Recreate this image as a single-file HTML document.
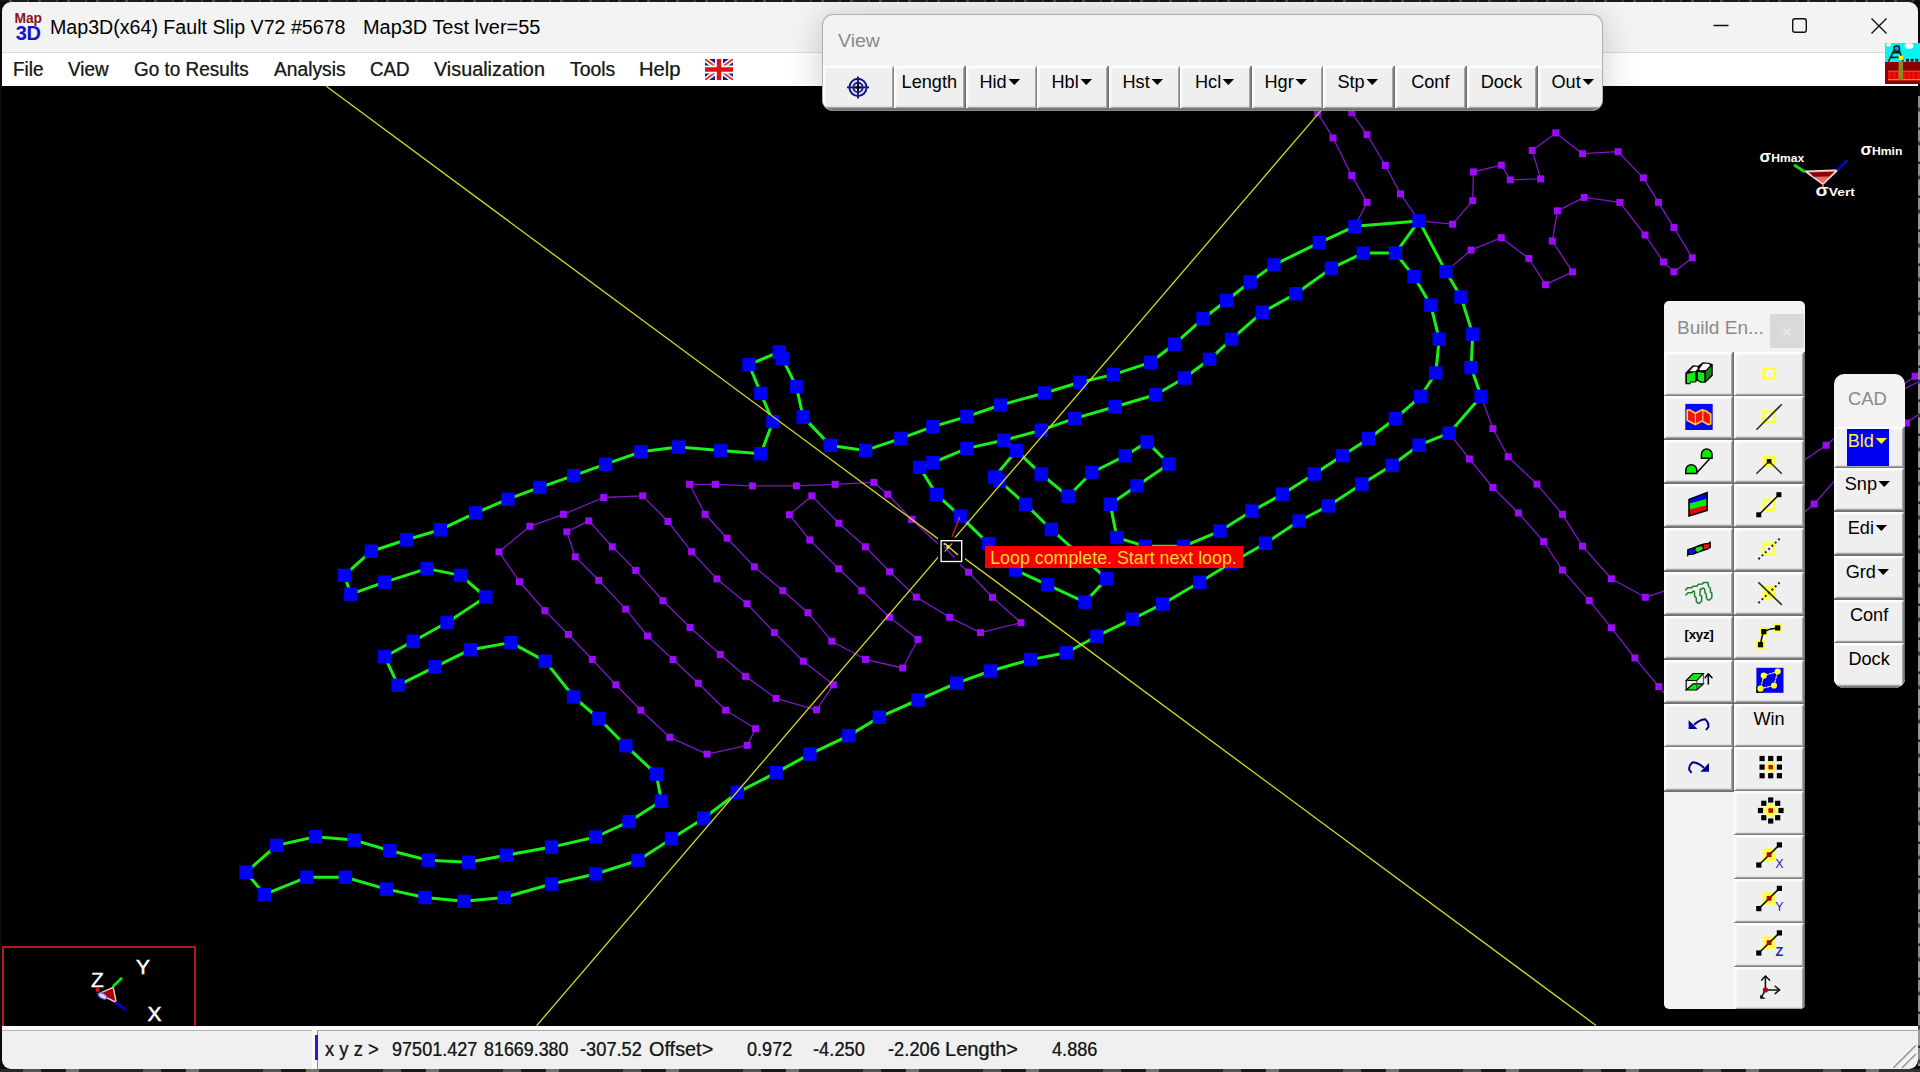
<!DOCTYPE html>
<html lang="en"><head><meta charset="utf-8"><title>Map3D(x64) Fault Slip V72 #5678</title>
<style>
html,body{margin:0;padding:0;background:#0b0b0b;}
#desk{position:absolute;left:0;top:1069px;width:1920px;height:3px;background:repeating-linear-gradient(90deg,#2a2622 0 23px,#5a554c 23px 41px,#1c1a18 41px 66px,#77726a 66px 79px,#34302c 79px 120px);}
#desk2{position:absolute;left:0;top:0;width:1920px;height:2px;background:repeating-linear-gradient(90deg,#141414 0 9px,#4a4a4a 9px 12px,#1c1c1c 12px 27px,#3a3a3a 27px 29px);}
body{width:1920px;height:1072px;position:relative;overflow:hidden;font-family:"Liberation Sans",sans-serif;}
#win{position:absolute;left:2px;top:2px;width:1916.2px;height:1067px;background:#000;border-radius:9px;overflow:hidden;}
#title{position:absolute;left:0;top:0;width:1916px;height:50px;background:#f3f3f3;border-bottom:1px solid #d9d9d9;}
.tt{transform-origin:0 50%;position:absolute;top:12.6px;font-size:19.6px;line-height:24px;color:#000;white-space:pre;}
#mapicon{position:absolute;left:0;top:0;width:46px;height:46px;font-weight:bold;}
#mapicon .m1{position:absolute;left:12.6px;top:8.8px;font-size:13.8px;line-height:16px;color:#8c1414;letter-spacing:-.1px;}
#mapicon .m2{position:absolute;left:13.8px;top:20.8px;font-size:20px;line-height:20px;color:#1414d2;letter-spacing:-.4px;}
#wc{position:absolute;left:1678px;top:0;}
#menu{position:absolute;left:0;top:51px;width:1916px;height:33px;background:#fff;}
.mi{transform-origin:0 50%;position:absolute;top:4.4px;font-size:19.6px;line-height:24px;color:#1c1c1c;white-space:pre;text-shadow:0 0 .7px rgba(0,0,0,.55);}
#flag{position:absolute;left:703px;top:6px;}
#canvas{position:absolute;left:0;top:84px;width:1916px;height:940px;background:#000;}
#status{position:absolute;left:0;top:1023.5px;width:1916px;height:43px;background:#f0f0f0;border-top:4px solid #fbfbfb;box-sizing:border-box;}
#sl{position:absolute;left:0;top:0;width:310px;height:1.4px;background:#b4b4b4;}
#sfield{position:absolute;left:310px;top:0;width:1606px;height:40px;border-left:5px solid #fafafa;box-sizing:border-box;}
#sfield i{position:absolute;left:0;top:0;width:1601px;height:39px;border-left:1.6px solid #8a8a8a;border-top:1.4px solid #a8a8a8;display:block;}
#caret{position:absolute;left:313px;top:5.4px;width:2.6px;height:25px;background:#2a1ccc;}
.st{transform-origin:0 50%;position:absolute;top:7.6px;font-size:19.6px;line-height:24px;color:#161616;white-space:pre;text-shadow:0 0 .7px rgba(0,0,0,.5);}
#grip{position:absolute;right:1.6px;bottom:0.6px;}
#redge{position:absolute;left:1918.4px;top:96px;width:1.6px;height:970px;background:repeating-linear-gradient(#8e8e8e 0 11px,#3c3c3c 12px 15px,#9a9a9a 16px 31px,#2e2e2e 32px 34px);}
#cv{position:absolute;left:0;top:0;}
#axes{position:absolute;left:2px;top:946px;width:194px;height:80px;border:2px solid #b01a1a;border-bottom:none;box-sizing:border-box;overflow:hidden;}
#axes svg{position:absolute;left:-2px;top:-2px;}
#corner{position:absolute;left:1885px;top:43px;}
.panel{position:absolute;background:#f3f3f3;box-sizing:border-box;overflow:hidden;}
#view{left:822px;top:14.2px;width:781px;height:96.6px;border-radius:11px;border:1px solid #b0b0b0;border-bottom-color:#8c8c8c;box-shadow:0 3px 34px rgba(0,0,0,.2);}
#build{left:1664px;top:301.4px;width:141.2px;height:707.8px;border-radius:5px;}
#cad{left:1833.8px;top:373.8px;width:71.2px;height:313.8px;border-radius:10px;}
.pt{transform-origin:0 50%;position:absolute;font-size:19px;line-height:24px;color:#8a8a8a;white-space:pre;}
.px{position:absolute;left:106.4px;top:12.8px;width:34px;height:34px;background:#d9d9d9;}
.row{position:absolute;left:0;}
.b{position:absolute;box-sizing:border-box;background:#efefef;box-shadow:inset -1.6px -1.8px 0 #6e6e6e, inset 1.6px 1.6px 0 #ffffff, inset -3px -3.2px 0 #a6a6a6, inset 3px 3px 0 #f6f6f6;}
.b svg{position:absolute;left:0;top:0;}
.bt{position:absolute;left:-11.6px;right:-7.6px;top:4.8px;text-align:center;font-size:19px;line-height:22px;color:#000;white-space:pre;transform:scaleX(.955);}
.bt.na{margin-left:2.4px;}
.xyz{position:absolute;left:0;width:70px;top:8.8px;text-align:center;font-size:13.4px;line-height:22px;font-weight:bold;color:#000;letter-spacing:-.3px;}
.ar{display:inline-block;width:0;height:0;border-left:6.5px solid transparent;border-right:6.5px solid transparent;border-top:6.6px solid #000;vertical-align:middle;margin-left:1.5px;position:relative;top:-1px;}
.b.sel .bx{position:absolute;left:13.6px;top:1.6px;width:42px;height:37px;background:#0000f0;}
.b.sel .bt{color:#fff04a;top:2.8px;}
.b.sel .ar{border-top-color:#ffee44;}

</style></head><body>
<div id="desk2"></div><div id="desk"></div>
<div id="win">
<div id="title"><div id="mapicon"><span class="m1">Map</span><span class="m2">3D</span></div><span id="t1" class="tt" style="left:47.80px;transform:scaleX(1.0011);">Map3D(x64) Fault Slip V72 #5678</span><span id="t2" class="tt" style="left:360.58px;transform:scaleX(1.0167);">Map3D Test lver=55</span>
<svg id="wc" width="240" height="50" viewBox="0 0 240 50"><path d="M33.5 23.5h15" stroke="#111" stroke-width="1.4" fill="none"/><rect x="112.7" y="16.7" width="13.6" height="13.6" rx="2.2" fill="none" stroke="#111" stroke-width="1.4"/><path d="M191.5 16.5l15 15m0-15l-15 15" stroke="#111" stroke-width="1.4" fill="none"/></svg>
</div>
<div id="menu"><span id="m0" class="mi" style="left:11.24px;transform:scaleX(0.9650);">File</span><span id="m1" class="mi" style="left:66.00px;transform:scaleX(0.9659);">View</span><span id="m2" class="mi" style="left:132.20px;transform:scaleX(0.9672);">Go to Results</span><span id="m3" class="mi" style="left:271.70px;transform:scaleX(0.9814);">Analysis</span><span id="m4" class="mi" style="left:367.74px;transform:scaleX(0.9573);">CAD</span><span id="m5" class="mi" style="left:432.20px;transform:scaleX(1.0115);">Visualization</span><span id="m6" class="mi" style="left:568.00px;transform:scaleX(0.9903);">Tools</span><span id="m7" class="mi" style="left:637.47px;transform:scaleX(1.0330);">Help</span><svg id="flag" width="28" height="21" viewBox="0 0 28 21"><rect width="28" height="21" fill="#1a1a8c"/><path d="M0 0L28 21M28 0L0 21" stroke="#fff" stroke-width="5"/><path d="M0 0L28 21M28 0L0 21" stroke="#e03a3a" stroke-width="2"/><path d="M14 0V21M0 10.5H28" stroke="#fff" stroke-width="8"/><path d="M14 0V21M0 10.5H28" stroke="#e01010" stroke-width="4.4"/></svg></div>
<div id="canvas"></div>
<div id="status"><div id="sl"></div><div id="sfield"><i></i></div><div id="caret"></div><span id="s0" class="st" style="left:322.70px;transform:scaleX(0.9414);">x y z &gt;</span><span id="s1" class="st" style="left:390.40px;transform:scaleX(0.9223);">97501.427</span><span id="s2" class="st" style="left:481.60px;transform:scaleX(0.9124);">81669.380</span><span id="s3" class="st" style="left:578.00px;transform:scaleX(0.9320);">-307.52</span><span id="s4" class="st" style="left:647.00px;transform:scaleX(1.0141);">Offset&gt;</span><span id="s5" class="st" style="left:744.50px;transform:scaleX(0.9245);">0.972</span><span id="s6" class="st" style="left:811.30px;transform:scaleX(0.9360);">-4.250</span><span id="s7" class="st" style="left:885.50px;transform:scaleX(0.9360);">-2.206</span><span id="s8" class="st" style="left:943.08px;transform:scaleX(1.0239);">Length&gt;</span><span id="s9" class="st" style="left:1049.60px;transform:scaleX(0.9260);">4.886</span><svg id="grip" width="30" height="30" viewBox="0 0 30 30"><path d="M5.4 30L30 5.4M14 30L30 14" stroke="#fdfdfd" stroke-width="2.2" fill="none"/><path d="M7.2 30L30 7.2M15.8 30L30 15.8" stroke="#a2a2a2" stroke-width="1.8" fill="none"/></svg></div>
</div>
<svg id="cv" width="1920" height="1072" viewBox="0 0 1920 1072">
<defs><clipPath id="cc"><rect x="2" y="86" width="1916" height="940"/></clipPath></defs>
<g clip-path="url(#cc)">
<g stroke="#7a18c8" stroke-width="1.3" fill="none" stroke-linejoin="round">
<polyline points="499.0,551.8 529.9,526.3 563.4,514.3 603.7,497.5 642.7,495.9 668.0,521.5 691.6,551.8 716.9,578.9 747.0,603.7 774.4,632.6 803.3,661.2 833.4,684.8 816.5,709.8 776.1,698.4 745.6,676.4 720.3,654.5 690.1,627.5 663.0,600.7 635.7,570.4 612.3,546.8 588.8,520.9 566.8,531.8 575.2,556.8 598.7,580.3 625.7,609.1 647.6,636.0 673.0,659.6 698.3,683.2 725.7,710.2 755.6,728.7 747.2,745.3 707.1,754.1 669.8,737.3 640.8,710.2 615.9,684.8 592.3,659.5 568.4,634.5 544.9,610.7 519.5,581.7 499.0,551.8"/>
<polyline points="689.6,484.3 715.5,484.3 752.4,485.9 796.4,485.9 835.2,484.3 873.8,482.4 887.7,494.3 911.7,519.5 968.6,572.2 992.5,597.3 1021.0,622.7 980.5,632.6 949.6,617.3 916.3,597.1 889.7,571.8 865.4,546.8 838.8,523.2 811.8,495.9 789.4,514.7 809.8,540.0 838.7,568.8 861.8,590.7 889.5,617.3 918.0,639.5 902.7,668.0 865.6,659.5 831.8,641.2 807.9,612.7 782.9,590.7 754.4,566.8 727.1,538.2 705.1,514.3 689.6,484.3"/>
<polyline points="1302.0,86.0 1317.6,112.8 1333.0,137.9 1351.8,175.6 1367.0,202.4 1354.9,226.3"/>
<polyline points="1336.0,86.0 1351.8,112.8 1367.0,134.6 1385.4,165.5 1400.5,194.0 1419.0,220.9"/>
<polyline points="1419.0,220.9 1452.6,224.2 1472.7,200.7 1473.4,171.9 1501.3,165.1 1510.3,179.9 1540.6,178.9 1532.2,150.4 1555.7,132.9 1582.5,153.7 1618.1,151.7 1643.3,177.9 1658.4,202.4 1673.9,227.6 1692.3,257.8 1673.9,271.9 1663.5,261.9 1645.0,235.0 1619.8,202.4 1584.2,197.4 1557.4,210.8 1552.3,241.0 1572.5,271.9 1545.6,284.7 1528.8,258.5 1501.3,237.7 1471.1,250.1 1445.9,271.6"/>
<polyline points="1481.1,396.3 1492.9,428.6 1508.2,456.8 1536.9,484.1 1562.4,514.3 1582.5,546.2 1611.4,578.8 1645.3,597.3 1662.5,591.6 1700.0,570.0"/>
<polyline points="1790.0,470.0 1826.2,445.2 1870.0,408.0 1915.1,376.3 1925.0,371.0"/>
<polyline points="1449.2,433.2 1469.4,459.0 1492.9,487.5 1518.4,513.0 1543.6,541.5 1562.4,570.1 1589.3,600.6 1611.4,627.8 1634.9,658.0 1658.8,686.6 1680.0,712.0"/>
<polyline points="1795.0,520.0 1814.2,504.0 1833.8,481.6 1870.0,452.0 1906.4,423.0 1925.0,410.0"/>
<polyline points="1900.0,391.0 1925.0,378.5"/>
</g>
<g fill="#9a0cfa">
<rect x="495.5" y="548.3" width="7" height="7"/><rect x="526.4" y="522.8" width="7" height="7"/><rect x="559.9" y="510.8" width="7" height="7"/><rect x="600.2" y="494.0" width="7" height="7"/><rect x="639.2" y="492.4" width="7" height="7"/><rect x="664.5" y="518.0" width="7" height="7"/><rect x="688.1" y="548.3" width="7" height="7"/><rect x="713.4" y="575.4" width="7" height="7"/><rect x="743.5" y="600.2" width="7" height="7"/><rect x="770.9" y="629.1" width="7" height="7"/><rect x="799.8" y="657.7" width="7" height="7"/><rect x="829.9" y="681.3" width="7" height="7"/><rect x="813.0" y="706.3" width="7" height="7"/><rect x="772.6" y="694.9" width="7" height="7"/><rect x="742.1" y="672.9" width="7" height="7"/><rect x="716.8" y="651.0" width="7" height="7"/><rect x="686.6" y="624.0" width="7" height="7"/><rect x="659.5" y="597.2" width="7" height="7"/><rect x="632.2" y="566.9" width="7" height="7"/><rect x="608.8" y="543.3" width="7" height="7"/><rect x="585.3" y="517.4" width="7" height="7"/><rect x="563.3" y="528.3" width="7" height="7"/><rect x="571.7" y="553.3" width="7" height="7"/><rect x="595.2" y="576.8" width="7" height="7"/><rect x="622.2" y="605.6" width="7" height="7"/><rect x="644.1" y="632.5" width="7" height="7"/><rect x="669.5" y="656.1" width="7" height="7"/><rect x="694.8" y="679.7" width="7" height="7"/><rect x="722.2" y="706.7" width="7" height="7"/><rect x="752.1" y="725.2" width="7" height="7"/><rect x="743.7" y="741.8" width="7" height="7"/><rect x="703.6" y="750.6" width="7" height="7"/><rect x="666.3" y="733.8" width="7" height="7"/><rect x="637.3" y="706.7" width="7" height="7"/><rect x="612.4" y="681.3" width="7" height="7"/><rect x="588.8" y="656.0" width="7" height="7"/><rect x="564.9" y="631.0" width="7" height="7"/><rect x="541.4" y="607.2" width="7" height="7"/><rect x="516.0" y="578.2" width="7" height="7"/>
<rect x="686.1" y="480.8" width="7" height="7"/><rect x="712.0" y="480.8" width="7" height="7"/><rect x="748.9" y="482.4" width="7" height="7"/><rect x="792.9" y="482.4" width="7" height="7"/><rect x="831.7" y="480.8" width="7" height="7"/><rect x="870.3" y="478.9" width="7" height="7"/><rect x="884.2" y="490.8" width="7" height="7"/><rect x="908.2" y="516.0" width="7" height="7"/><rect x="965.1" y="568.7" width="7" height="7"/><rect x="989.0" y="593.8" width="7" height="7"/><rect x="1017.5" y="619.2" width="7" height="7"/><rect x="977.0" y="629.1" width="7" height="7"/><rect x="946.1" y="613.8" width="7" height="7"/><rect x="912.8" y="593.6" width="7" height="7"/><rect x="886.2" y="568.3" width="7" height="7"/><rect x="861.9" y="543.3" width="7" height="7"/><rect x="835.3" y="519.7" width="7" height="7"/><rect x="808.3" y="492.4" width="7" height="7"/><rect x="785.9" y="511.2" width="7" height="7"/><rect x="806.3" y="536.5" width="7" height="7"/><rect x="835.2" y="565.3" width="7" height="7"/><rect x="858.3" y="587.2" width="7" height="7"/><rect x="886.0" y="613.8" width="7" height="7"/><rect x="914.5" y="636.0" width="7" height="7"/><rect x="899.2" y="664.5" width="7" height="7"/><rect x="862.1" y="656.0" width="7" height="7"/><rect x="828.3" y="637.7" width="7" height="7"/><rect x="804.4" y="609.2" width="7" height="7"/><rect x="779.4" y="587.2" width="7" height="7"/><rect x="750.9" y="563.3" width="7" height="7"/><rect x="723.6" y="534.7" width="7" height="7"/><rect x="701.6" y="510.8" width="7" height="7"/>
<rect x="1314.1" y="109.3" width="7" height="7"/><rect x="1329.5" y="134.4" width="7" height="7"/><rect x="1348.3" y="172.1" width="7" height="7"/><rect x="1363.5" y="198.9" width="7" height="7"/>
<rect x="1348.3" y="109.3" width="7" height="7"/><rect x="1363.5" y="131.1" width="7" height="7"/><rect x="1381.9" y="162.0" width="7" height="7"/><rect x="1397.0" y="190.5" width="7" height="7"/>
<rect x="1449.1" y="220.7" width="7" height="7"/><rect x="1469.2" y="197.2" width="7" height="7"/><rect x="1469.9" y="168.4" width="7" height="7"/><rect x="1497.8" y="161.6" width="7" height="7"/><rect x="1506.8" y="176.4" width="7" height="7"/><rect x="1537.1" y="175.4" width="7" height="7"/><rect x="1528.7" y="146.9" width="7" height="7"/><rect x="1552.2" y="129.4" width="7" height="7"/><rect x="1579.0" y="150.2" width="7" height="7"/><rect x="1614.6" y="148.2" width="7" height="7"/><rect x="1639.8" y="174.4" width="7" height="7"/><rect x="1654.9" y="198.9" width="7" height="7"/><rect x="1670.4" y="224.1" width="7" height="7"/><rect x="1688.8" y="254.3" width="7" height="7"/><rect x="1670.4" y="268.4" width="7" height="7"/><rect x="1660.0" y="258.4" width="7" height="7"/><rect x="1641.5" y="231.5" width="7" height="7"/><rect x="1616.3" y="198.9" width="7" height="7"/><rect x="1580.7" y="193.9" width="7" height="7"/><rect x="1553.9" y="207.3" width="7" height="7"/><rect x="1548.8" y="237.5" width="7" height="7"/><rect x="1569.0" y="268.4" width="7" height="7"/><rect x="1542.1" y="281.2" width="7" height="7"/><rect x="1525.3" y="255.0" width="7" height="7"/><rect x="1497.8" y="234.2" width="7" height="7"/><rect x="1467.6" y="246.6" width="7" height="7"/>
<rect x="1489.4" y="425.1" width="7" height="7"/><rect x="1504.7" y="453.3" width="7" height="7"/><rect x="1533.4" y="480.6" width="7" height="7"/><rect x="1558.9" y="510.8" width="7" height="7"/><rect x="1579.0" y="542.7" width="7" height="7"/><rect x="1607.9" y="575.3" width="7" height="7"/><rect x="1641.8" y="593.8" width="7" height="7"/>
<rect x="1822.7" y="441.7" width="7" height="7"/><rect x="1911.6" y="372.8" width="7" height="7"/>
<rect x="1465.9" y="455.5" width="7" height="7"/><rect x="1489.4" y="484.0" width="7" height="7"/><rect x="1514.9" y="509.5" width="7" height="7"/><rect x="1540.1" y="538.0" width="7" height="7"/><rect x="1558.9" y="566.6" width="7" height="7"/><rect x="1585.8" y="597.1" width="7" height="7"/><rect x="1607.9" y="624.3" width="7" height="7"/><rect x="1631.4" y="654.5" width="7" height="7"/><rect x="1655.3" y="683.1" width="7" height="7"/>
<rect x="1810.7" y="500.5" width="7" height="7"/><rect x="1902.9" y="419.5" width="7" height="7"/>
</g>
<g stroke="#18f018" stroke-width="3" fill="none" stroke-linejoin="round">
<polyline points="344.4,575.4 371.3,551.2 406.5,539.8 440.4,529.7 475.7,512.9 508.0,499.2 539.8,487.4 573.7,475.6 605.6,464.2 640.9,451.8 678.5,447.1 720.5,450.4 760.8,453.8 772.9,421.6 760.8,393.4 749.0,364.5 779.3,352.0 782.6,358.8 796.4,386.6 803.1,416.9 830.3,445.4 865.6,450.4 900.9,438.4 932.9,426.6 966.9,416.6 1000.6,405.0 1044.6,393.0 1079.9,382.3 1113.4,374.6 1150.7,362.3 1174.4,344.2 1203.0,318.7 1226.6,300.5 1250.1,282.0 1273.9,264.9 1319.3,242.7 1354.9,226.3 1419.0,220.9 1445.9,271.6 1461.0,297.1 1472.7,334.1 1471.1,367.6 1481.1,396.3 1449.2,433.2 1419.0,445.1 1392.1,465.3 1361.9,484.1 1328.3,505.9 1299.1,521.0 1265.5,543.2 1231.0,563.0 1199.7,582.2 1162.6,604.0 1132.2,619.1 1096.8,636.2 1066.2,652.8 1030.6,659.6 990.5,671.0 956.6,683.2 918.0,700.0 879.4,717.2 848.8,735.6 809.8,754.1 776.2,772.6 737.3,792.7 703.7,818.2 671.5,838.7 637.9,860.5 595.6,874.0 551.6,884.0 504.2,897.5 463.9,901.2 425.0,897.5 386.4,889.1 345.4,877.3 306.8,877.3 264.5,894.4 246.0,872.3 276.6,845.4 315.5,836.7 354.1,840.1 389.7,850.5 428.3,860.2 468.6,862.2 506.2,855.2 551.6,847.1 595.6,837.0 629.1,821.6 661.4,801.1 656.3,774.2 625.8,745.7 598.9,718.5 573.7,697.0 545.2,661.1 511.0,642.6 470.3,649.7 435.1,666.8 398.1,685.3 384.7,656.7 413.2,641.3 447.1,622.5 485.8,597.0 460.6,575.4 427.0,568.6 384.7,582.1 350.8,594.2 344.4,575.4"/>
<polyline points="919.6,467.3 933.0,462.6 966.9,448.4 1003.8,440.3 1041.3,430.2 1074.8,418.4 1115.1,406.7 1155.6,394.7 1184.4,378.0 1209.6,359.3 1231.6,339.2 1262.2,312.3 1295.8,293.8 1331.4,268.2 1363.3,253.1 1395.5,253.1 1414.0,276.6 1430.8,305.2 1439.2,339.1 1435.8,373.0 1420.7,396.3 1395.5,418.5 1368.6,438.7 1342.6,455.6 1314.2,474.0 1282.3,494.2 1251.9,511.1 1219.9,531.1 1183.5,546.3 1145.3,546.3 1116.9,537.6 1110.3,504.3 1137.0,485.8 1169.0,464.0 1147.1,441.9 1125.3,455.8 1091.8,472.5 1068.2,496.3 1041.2,474.1 1016.4,450.6 994.5,477.0 999.5,481.0 1025.6,504.4 1051.3,529.5 1106.8,578.8 1084.9,602.1 1047.6,584.8 1015.5,570.0 988.5,543.6 960.2,516.1 936.5,494.4 919.6,467.3"/>
<polyline points="1395.5,253.1 1419.0,220.9"/>
</g>
<g fill="#0000f4">
<rect x="337.7" y="568.7" width="13.4" height="13.4"/><rect x="364.6" y="544.5" width="13.4" height="13.4"/><rect x="399.8" y="533.1" width="13.4" height="13.4"/><rect x="433.7" y="523.0" width="13.4" height="13.4"/><rect x="469.0" y="506.2" width="13.4" height="13.4"/><rect x="501.3" y="492.5" width="13.4" height="13.4"/><rect x="533.1" y="480.7" width="13.4" height="13.4"/><rect x="567.0" y="468.9" width="13.4" height="13.4"/><rect x="598.9" y="457.5" width="13.4" height="13.4"/><rect x="634.2" y="445.1" width="13.4" height="13.4"/><rect x="671.8" y="440.4" width="13.4" height="13.4"/><rect x="713.8" y="443.7" width="13.4" height="13.4"/><rect x="754.1" y="447.1" width="13.4" height="13.4"/><rect x="766.2" y="414.9" width="13.4" height="13.4"/><rect x="754.1" y="386.7" width="13.4" height="13.4"/><rect x="742.3" y="357.8" width="13.4" height="13.4"/><rect x="772.6" y="345.3" width="13.4" height="13.4"/><rect x="775.9" y="352.1" width="13.4" height="13.4"/><rect x="789.7" y="379.9" width="13.4" height="13.4"/><rect x="796.4" y="410.2" width="13.4" height="13.4"/><rect x="823.6" y="438.7" width="13.4" height="13.4"/><rect x="858.9" y="443.7" width="13.4" height="13.4"/><rect x="894.2" y="431.7" width="13.4" height="13.4"/><rect x="926.2" y="419.9" width="13.4" height="13.4"/><rect x="960.2" y="409.9" width="13.4" height="13.4"/><rect x="993.9" y="398.3" width="13.4" height="13.4"/><rect x="1037.9" y="386.3" width="13.4" height="13.4"/><rect x="1073.2" y="375.6" width="13.4" height="13.4"/><rect x="1106.7" y="367.9" width="13.4" height="13.4"/><rect x="1144.0" y="355.6" width="13.4" height="13.4"/><rect x="1167.7" y="337.5" width="13.4" height="13.4"/><rect x="1196.3" y="312.0" width="13.4" height="13.4"/><rect x="1219.9" y="293.8" width="13.4" height="13.4"/><rect x="1243.4" y="275.3" width="13.4" height="13.4"/><rect x="1267.2" y="258.2" width="13.4" height="13.4"/><rect x="1312.6" y="236.0" width="13.4" height="13.4"/><rect x="1348.2" y="219.6" width="13.4" height="13.4"/><rect x="1412.3" y="214.2" width="13.4" height="13.4"/><rect x="1439.2" y="264.9" width="13.4" height="13.4"/><rect x="1454.3" y="290.4" width="13.4" height="13.4"/><rect x="1466.0" y="327.4" width="13.4" height="13.4"/><rect x="1464.4" y="360.9" width="13.4" height="13.4"/><rect x="1474.4" y="389.6" width="13.4" height="13.4"/><rect x="1442.5" y="426.5" width="13.4" height="13.4"/><rect x="1412.3" y="438.4" width="13.4" height="13.4"/><rect x="1385.4" y="458.6" width="13.4" height="13.4"/><rect x="1355.2" y="477.4" width="13.4" height="13.4"/><rect x="1321.6" y="499.2" width="13.4" height="13.4"/><rect x="1292.4" y="514.3" width="13.4" height="13.4"/><rect x="1258.8" y="536.5" width="13.4" height="13.4"/><rect x="1224.3" y="556.3" width="13.4" height="13.4"/><rect x="1193.0" y="575.5" width="13.4" height="13.4"/><rect x="1155.9" y="597.3" width="13.4" height="13.4"/><rect x="1125.5" y="612.4" width="13.4" height="13.4"/><rect x="1090.1" y="629.5" width="13.4" height="13.4"/><rect x="1059.5" y="646.1" width="13.4" height="13.4"/><rect x="1023.9" y="652.9" width="13.4" height="13.4"/><rect x="983.8" y="664.3" width="13.4" height="13.4"/><rect x="949.9" y="676.5" width="13.4" height="13.4"/><rect x="911.3" y="693.3" width="13.4" height="13.4"/><rect x="872.7" y="710.5" width="13.4" height="13.4"/><rect x="842.1" y="728.9" width="13.4" height="13.4"/><rect x="803.1" y="747.4" width="13.4" height="13.4"/><rect x="769.5" y="765.9" width="13.4" height="13.4"/><rect x="730.6" y="786.0" width="13.4" height="13.4"/><rect x="697.0" y="811.5" width="13.4" height="13.4"/><rect x="664.8" y="832.0" width="13.4" height="13.4"/><rect x="631.2" y="853.8" width="13.4" height="13.4"/><rect x="588.9" y="867.3" width="13.4" height="13.4"/><rect x="544.9" y="877.3" width="13.4" height="13.4"/><rect x="497.5" y="890.8" width="13.4" height="13.4"/><rect x="457.2" y="894.5" width="13.4" height="13.4"/><rect x="418.3" y="890.8" width="13.4" height="13.4"/><rect x="379.7" y="882.4" width="13.4" height="13.4"/><rect x="338.7" y="870.6" width="13.4" height="13.4"/><rect x="300.1" y="870.6" width="13.4" height="13.4"/><rect x="257.8" y="887.7" width="13.4" height="13.4"/><rect x="239.3" y="865.6" width="13.4" height="13.4"/><rect x="269.9" y="838.7" width="13.4" height="13.4"/><rect x="308.8" y="830.0" width="13.4" height="13.4"/><rect x="347.4" y="833.4" width="13.4" height="13.4"/><rect x="383.0" y="843.8" width="13.4" height="13.4"/><rect x="421.6" y="853.5" width="13.4" height="13.4"/><rect x="461.9" y="855.5" width="13.4" height="13.4"/><rect x="499.5" y="848.5" width="13.4" height="13.4"/><rect x="544.9" y="840.4" width="13.4" height="13.4"/><rect x="588.9" y="830.3" width="13.4" height="13.4"/><rect x="622.4" y="814.9" width="13.4" height="13.4"/><rect x="654.7" y="794.4" width="13.4" height="13.4"/><rect x="649.6" y="767.5" width="13.4" height="13.4"/><rect x="619.1" y="739.0" width="13.4" height="13.4"/><rect x="592.2" y="711.8" width="13.4" height="13.4"/><rect x="567.0" y="690.3" width="13.4" height="13.4"/><rect x="538.5" y="654.4" width="13.4" height="13.4"/><rect x="504.3" y="635.9" width="13.4" height="13.4"/><rect x="463.6" y="643.0" width="13.4" height="13.4"/><rect x="428.4" y="660.1" width="13.4" height="13.4"/><rect x="391.4" y="678.6" width="13.4" height="13.4"/><rect x="378.0" y="650.0" width="13.4" height="13.4"/><rect x="406.5" y="634.6" width="13.4" height="13.4"/><rect x="440.4" y="615.8" width="13.4" height="13.4"/><rect x="479.1" y="590.3" width="13.4" height="13.4"/><rect x="453.9" y="568.7" width="13.4" height="13.4"/><rect x="420.3" y="561.9" width="13.4" height="13.4"/><rect x="378.0" y="575.4" width="13.4" height="13.4"/><rect x="344.1" y="587.5" width="13.4" height="13.4"/>
<rect x="912.9" y="460.6" width="13.4" height="13.4"/><rect x="926.3" y="455.9" width="13.4" height="13.4"/><rect x="960.2" y="441.7" width="13.4" height="13.4"/><rect x="997.1" y="433.6" width="13.4" height="13.4"/><rect x="1034.6" y="423.5" width="13.4" height="13.4"/><rect x="1068.1" y="411.7" width="13.4" height="13.4"/><rect x="1108.4" y="400.0" width="13.4" height="13.4"/><rect x="1148.9" y="388.0" width="13.4" height="13.4"/><rect x="1177.7" y="371.3" width="13.4" height="13.4"/><rect x="1202.9" y="352.6" width="13.4" height="13.4"/><rect x="1224.9" y="332.5" width="13.4" height="13.4"/><rect x="1255.5" y="305.6" width="13.4" height="13.4"/><rect x="1289.1" y="287.1" width="13.4" height="13.4"/><rect x="1324.7" y="261.5" width="13.4" height="13.4"/><rect x="1356.6" y="246.4" width="13.4" height="13.4"/><rect x="1388.8" y="246.4" width="13.4" height="13.4"/><rect x="1407.3" y="269.9" width="13.4" height="13.4"/><rect x="1424.1" y="298.5" width="13.4" height="13.4"/><rect x="1432.5" y="332.4" width="13.4" height="13.4"/><rect x="1429.1" y="366.3" width="13.4" height="13.4"/><rect x="1414.0" y="389.6" width="13.4" height="13.4"/><rect x="1388.8" y="411.8" width="13.4" height="13.4"/><rect x="1361.9" y="432.0" width="13.4" height="13.4"/><rect x="1335.9" y="448.9" width="13.4" height="13.4"/><rect x="1307.5" y="467.3" width="13.4" height="13.4"/><rect x="1275.6" y="487.5" width="13.4" height="13.4"/><rect x="1245.2" y="504.4" width="13.4" height="13.4"/><rect x="1213.2" y="524.4" width="13.4" height="13.4"/><rect x="1176.8" y="539.6" width="13.4" height="13.4"/><rect x="1138.6" y="539.6" width="13.4" height="13.4"/><rect x="1110.2" y="530.9" width="13.4" height="13.4"/><rect x="1103.6" y="497.6" width="13.4" height="13.4"/><rect x="1130.3" y="479.1" width="13.4" height="13.4"/><rect x="1162.3" y="457.3" width="13.4" height="13.4"/><rect x="1140.4" y="435.2" width="13.4" height="13.4"/><rect x="1118.6" y="449.1" width="13.4" height="13.4"/><rect x="1085.1" y="465.8" width="13.4" height="13.4"/><rect x="1061.5" y="489.6" width="13.4" height="13.4"/><rect x="1034.5" y="467.4" width="13.4" height="13.4"/><rect x="1009.7" y="443.9" width="13.4" height="13.4"/><rect x="987.8" y="470.3" width="13.4" height="13.4"/><rect x="992.8" y="474.3" width="13.4" height="13.4"/><rect x="1018.9" y="497.7" width="13.4" height="13.4"/><rect x="1044.6" y="522.8" width="13.4" height="13.4"/><rect x="1100.1" y="572.1" width="13.4" height="13.4"/><rect x="1078.2" y="595.4" width="13.4" height="13.4"/><rect x="1040.9" y="578.1" width="13.4" height="13.4"/><rect x="1008.8" y="563.3" width="13.4" height="13.4"/><rect x="981.8" y="536.9" width="13.4" height="13.4"/><rect x="953.5" y="509.4" width="13.4" height="13.4"/><rect x="929.8" y="487.7" width="13.4" height="13.4"/>
</g>
<g stroke="#d6d828" stroke-width="1.3" fill="none">
<polyline points="326.3,86.3 1596.0,1025.4"/><polyline points="536.6,1025.7 1342.1,86.0"/></g>
<line x1="959.2" y1="518.4" x2="952" y2="536.8" stroke="#b41c1c" stroke-width="1.5"/><line x1="959.6" y1="517" x2="958.6" y2="520" stroke="#b030e0" stroke-width="1.5"/>
<g id="cursor"><rect x="938" y="537.5" width="27" height="27" fill="#000"/><rect x="941.1" y="540.7" width="20.6" height="20.8" fill="#000" stroke="#fff" stroke-width="1.35"/><line x1="943.8" y1="546.4" x2="954.4" y2="557.6" stroke="#6a10b8" stroke-width="1.6"/><line x1="945.2" y1="543.8" x2="958" y2="555" stroke="#d8d850" stroke-width="1.5"/><line x1="944.6" y1="551.6" x2="952.2" y2="543.4" stroke="#b8b848" stroke-width="1.2"/><circle cx="948.2" cy="546.8" r="1.9" fill="#d8f020"/><rect x="943.6" y="543" width="2.2" height="2" fill="#c8c8d8"/></g>
<rect x="984.6" y="546.4" width="258.2" height="21.2" fill="#f60000" shape-rendering="crispEdges"/>
<text x="990.2" y="563.8" font-family="Liberation Sans, sans-serif" font-size="18.6px" fill="#ffd83a" textLength="246.6" lengthAdjust="spacingAndGlyphs">Loop complete. Start next loop.</text>
<g id="stress"><polygon points="1805.2,171.2 1837.6,170.2 1822.9,184.3" fill="#e86a6a" stroke="#e8dcdc" stroke-width="1.6"/><polygon points="1809.5,172.6 1834,171.8 1829,176.6 1813.5,176.8" fill="#900000"/><line x1="1795" y1="165.6" x2="1803.8" y2="171.2" stroke="#10d810" stroke-width="3" stroke-linecap="round"/><line x1="1846.6" y1="161" x2="1838" y2="169.4" stroke="#0808b8" stroke-width="3" stroke-linecap="round"/><line x1="1822.9" y1="184" x2="1822.9" y2="187" stroke="#f06060" stroke-width="2"/><g font-family="Liberation Sans, sans-serif" font-weight="bold" fill="#fff"><text x="1759.6" y="162" font-size="11.5px" textLength="44.6" lengthAdjust="spacingAndGlyphs"><tspan font-size="16px">σ</tspan>Hmax</text><text x="1860.4" y="155.2" font-size="11.5px" textLength="42" lengthAdjust="spacingAndGlyphs"><tspan font-size="16px">σ</tspan>Hmin</text><text x="1815.4" y="195.8" font-size="11.5px" textLength="39.6" lengthAdjust="spacingAndGlyphs"><tspan font-size="16px">σ</tspan>Vert</text></g></g>
</g>
</svg>
<div id="redge"></div>
<div id="axes"><svg width="194" height="80" viewBox="2 946 194 80"><g><polygon points="113.3,987.4 98.6,993.7 116.2,1002.5" fill="#a80000" stroke="#f4d0d0" stroke-width="1.4"/><ellipse cx="102.5" cy="996" rx="4.6" ry="2.6" transform="rotate(28 102.5 996)" fill="#d8d8f4" stroke="#5050c8" stroke-width="1"/><line x1="113.5" y1="986" x2="121.3" y2="978.4" stroke="#10e010" stroke-width="2.8" stroke-linecap="round"/><line x1="116.5" y1="1002.8" x2="125" y2="1009.4" stroke="#0000c8" stroke-width="3" stroke-linecap="round"/><rect x="95.8" y="988.2" width="3.4" height="3.6" fill="#f01010"/></g><text x="136" y="973.8" font-family="Liberation Sans, sans-serif" font-size="21px" fill="#fff" stroke="#fff" stroke-width="0.5">Y</text><text x="91" y="986.8" font-family="Liberation Sans, sans-serif" font-size="21px" fill="#fff" stroke="#fff" stroke-width="0.3">Z</text><text x="147.6" y="1021" font-family="Liberation Sans, sans-serif" font-size="21px" fill="#fff" stroke="#fff" stroke-width="0.5">X</text></svg></div>
<svg id="corner" width="35" height="41" viewBox="0 0 35 41"><rect width="35" height="19.2" fill="#08f4f4"/><rect y="19" width="35" height="22" fill="#8c0000"/><rect x="3" y="29" width="32" height="7" fill="#f60a0a"/><path d="M7 29v7M11.5 29v7M22 29v7M26.5 29v7M31 29v7" stroke="#c00808" stroke-width="1.4"/><rect x="3" y="27.6" width="32" height="1.3" fill="#c8601c"/><rect x="3" y="36" width="32" height="1.3" fill="#e08840"/><rect x="13.6" y="18.6" width="4.4" height="18.4" fill="#8c8c1c"/><rect x="1.2" y="0.2" width="5" height="3.2" rx="1.4" fill="#f8ffff"/><rect x="19.8" y="0.2" width="8.6" height="5.6" rx="2.4" fill="#f8ffff"/><path d="M3.4 18.6L10 5.4M13.6 5.4L18 18.6M8.4 9.6H15M5.6 14.4H17" stroke="#0a2424" stroke-width="1.7" fill="none"/><circle cx="11.8" cy="5.6" r="2.8" fill="#2aa0b4" stroke="#0a1c1c" stroke-width="1.5"/><rect x="13.6" y="12.6" width="4.4" height="4.4" fill="#f6f60a"/><path d="M21 17.2H35" stroke="#0c2020" stroke-width="3" stroke-dasharray="3 1.6"/></svg>
<div class="panel" id="view"><span id="pv" class="pt" style="left:14.50px;transform:scaleX(1.0263);top:13.6px;">View</span><div class="row" style="top:50.6px"><div class="b " style="left:-0.4px;top:0px;width:71.9px;height:44.6px"><svg width="71" height="44" viewBox="0 0 71 44"><g fill="none" stroke="#14147e" stroke-width="1.9"><circle cx="35" cy="21.4" r="8.6" fill="#dcdcfa"/><circle cx="35" cy="21.4" r="4.6" fill="#e8e8f4"/><path d="M35 10.4V32.4M24 21.4H46"/></g><path d="M35 18.6V24.2M32.2 21.4H37.8" stroke="#000" stroke-width="2"/></svg></div><div class="b " style="left:71.1px;top:0px;width:71.9px;height:44.6px"><span class="bt na">Length</span></div><div class="b " style="left:142.7px;top:0px;width:71.9px;height:44.6px"><span class="bt">Hid<i class="ar"></i></span></div><div class="b " style="left:214.2px;top:0px;width:71.9px;height:44.6px"><span class="bt">Hbl<i class="ar"></i></span></div><div class="b " style="left:285.8px;top:0px;width:71.9px;height:44.6px"><span class="bt">Hst<i class="ar"></i></span></div><div class="b " style="left:357.4px;top:0px;width:71.9px;height:44.6px"><span class="bt">Hcl<i class="ar"></i></span></div><div class="b " style="left:428.9px;top:0px;width:71.9px;height:44.6px"><span class="bt">Hgr<i class="ar"></i></span></div><div class="b " style="left:500.4px;top:0px;width:71.9px;height:44.6px"><span class="bt">Stp<i class="ar"></i></span></div><div class="b " style="left:572.0px;top:0px;width:71.9px;height:44.6px"><span class="bt na">Conf</span></div><div class="b " style="left:643.5px;top:0px;width:71.9px;height:44.6px"><span class="bt na">Dock</span></div><div class="b " style="left:715.1px;top:0px;width:71.9px;height:44.6px"><span class="bt">Out<i class="ar"></i></span></div></div></div>
<div class="panel" id="build"><span id="pb" class="pt" style="left:12.61px;transform:scaleX(1.0033);top:14.2px;">Build En...</span><div class="px"><svg width="34" height="34" viewBox="0 0 34 34"><path d="M13.5 14.5l7 7m0-7l-7 7" stroke="#ececec" stroke-width="1.4" fill="none"/></svg></div><div class="row" style="top:50.8px"><div class="b " style="left:0px;top:0.0px;width:70.4px;height:44.4px"><svg width="70" height="44" viewBox="0 0 70 44" ><polygon points="21.33,20.83 28.79,13.37 34.01,13.74 38.87,10.20 44.09,10.76 48.75,12.06 48.75,23.63 41.48,30.72 36.63,30.72 33.27,28.67 31.40,30.53 26.93,30.53 26.18,32.21 21.33,32.21" fill="#000" stroke="none" stroke-width="0" /><polygon points="23.01,21.95 31.22,20.08 31.22,29.41 26.37,29.60 25.99,31.09 23.01,31.09" fill="#12f012" stroke="none" stroke-width="0" /><polygon points="33.83,19.71 40.17,21.02 40.17,29.79 37.00,29.60 33.83,27.55" fill="#12f012" stroke="none" stroke-width="0" /><polygon points="42.04,19.34 47.45,14.11 47.45,22.70 42.04,28.85" fill="#108a10" stroke="none" stroke-width="0" /><polygon points="25.43,19.15 29.54,14.86 33.27,14.86 33.83,16.73 31.40,19.15" fill="#fff" stroke="none" stroke-width="0" /><polygon points="35.32,17.10 39.24,11.87 43.72,11.87 46.33,12.99 41.85,18.03 35.88,18.22" fill="#fff" stroke="none" stroke-width="0" /></svg></div><div class="b " style="left:0px;top:43.9px;width:70.4px;height:44.4px"><svg width="70" height="44" viewBox="0 0 70 44" ><rect x="21.3" y="7.9" width="27.4" height="26.1" fill="#0808f0"/><polygon points="23.19,14.21 26.18,14.21 31.40,17.20 38.12,13.84 41.85,14.96 46.70,18.32 46.70,28.02 44.09,28.39 38.12,25.03 31.40,28.58 26.93,26.15 23.19,24.29" fill="#f81008" stroke="#ffc848" stroke-width="1.7" stroke-linejoin="round"/><polyline points="31.40,17.57 31.40,28.02" fill="none" stroke="#ffd060" stroke-width="1.3" stroke-linejoin="round" stroke-linecap="round" stroke-dasharray="1.3 1.3"/><polyline points="38.87,14.40 38.87,24.85" fill="none" stroke="#ffd060" stroke-width="1.3" stroke-linejoin="round" stroke-linecap="round" stroke-dasharray="1.3 1.3"/></svg></div><div class="b " style="left:0px;top:87.8px;width:70.4px;height:44.4px"><svg width="70" height="44" viewBox="0 0 70 44" ><line x1="32.8" y1="32.8" x2="46.0" y2="18.5" stroke="#000" stroke-width="1.5" /><path d="M37.4 18.2 L37.4 14.4 A5.3 5.3 0 0 1 48.0 14.4 L48.0 18.2 Z" fill="#00f000" stroke="#000" stroke-width="1.5"/><path d="M21.8 33.5 L21.8 30.2 A5.5 5.5 0 0 1 32.8 30.2 L32.8 33.5 Z" fill="#00f000" stroke="#000" stroke-width="1.5"/></svg></div><div class="b " style="left:0px;top:131.8px;width:70.4px;height:44.4px"><svg width="70" height="44" viewBox="0 0 70 44" ><polygon points="25.0,15.6 43.1,9.0 43.1,15.2 25.0,20.1" fill="#0000f0" stroke="none" stroke-width="1" /><polygon points="25.0,19.7 43.1,14.8 43.1,21.5 25.0,25.9" fill="#00f000" stroke="none" stroke-width="1" /><polygon points="25.0,25.5 43.1,21.2 43.1,26.3 25.0,31.6" fill="#f00000" stroke="none" stroke-width="1" /><polygon points="25.0,15.6 43.1,8.6 43.1,26.3 25.0,31.9" fill="none" stroke="#000" stroke-width="1.6" /></svg></div><div class="b " style="left:0px;top:175.7px;width:70.4px;height:44.4px"><svg width="70" height="44" viewBox="0 0 70 44" ><polygon points="23.19,21.13 29.91,18.89 35.13,16.65 40.36,15.16 44.84,14.79 45.58,13.29 46.89,13.67 46.89,19.64 44.09,21.50 39.61,23.00 34.39,24.86 29.54,26.73 24.69,27.10 23.94,28.59 23.01,28.22" fill="#000" stroke="none" stroke-width="0" /><polygon points="24.50,22.06 30.10,20.20 31.22,23.00 29.54,25.42 24.87,25.98" fill="#1010e8" stroke="none" stroke-width="0" /><polygon points="31.59,19.82 38.12,17.96 38.87,21.32 33.83,23.93 31.59,23.00" fill="#20e020" stroke="none" stroke-width="0" /><polygon points="39.80,16.47 44.84,15.98 45.51,18.89 43.34,20.68 39.80,20.94" fill="#f01010" stroke="none" stroke-width="0" /></svg></div><div class="b " style="left:0px;top:219.6px;width:70.4px;height:44.4px"><svg width="70" height="44" viewBox="0 0 70 44" ><polyline points="21.70,17.87 23.94,15.63 27.67,15.63 29.16,14.14 32.90,14.14 34.39,12.27 38.12,12.09 39.61,10.60 44.09,10.60 44.46,14.51 46.33,16.01 46.51,20.11 47.82,20.86 47.82,25.71 45.58,27.95 44.09,27.95 42.41,26.08 42.22,21.98 40.92,20.86 40.73,17.13 39.24,16.01 36.25,17.50 35.88,23.10 37.75,24.21 37.56,29.07 35.51,31.30 34.01,31.30 32.34,29.44 32.15,25.71 30.66,24.59 30.47,19.74 29.16,18.99 27.67,20.86 23.94,20.86 21.89,22.91" fill="none" stroke="#1c8030" stroke-width="1.5" stroke-linejoin="round" stroke-linecap="round" /></svg></div><div class="b " style="left:0px;top:263.5px;width:70.4px;height:44.4px"><span class="xyz">[xyz]</span></div><div class="b " style="left:0px;top:307.4px;width:70.4px;height:44.4px"><svg width="70" height="44" viewBox="0 0 70 44" ><polygon points="22.2,30.0 29.1,23.8 39.4,23.8 32.8,30.0" fill="#00f000" stroke="#000" stroke-width="1.2" /><polygon points="22.2,20.5 29.1,13.5 39.4,13.5 32.8,20.5" fill="#00f000" stroke="#000" stroke-width="1.2" /><line x1="22.2" y1="20.5" x2="22.2" y2="30.0" stroke="#000" stroke-width="1.2" /><line x1="32.8" y1="20.5" x2="32.8" y2="30.0" stroke="#444" stroke-width="1" /><line x1="39.4" y1="13.5" x2="39.4" y2="23.8" stroke="#444" stroke-width="1" /><line x1="44.3" y1="24.6" x2="44.3" y2="14.1" stroke="#000" stroke-width="1.6" /><path d="M41.1 17.7 L44.3 13.8 L48.0 17.7" fill="none" stroke="#000" stroke-width="1.6" stroke-linejoin="round" stroke-linecap="round" /></svg></div><div class="b " style="left:0px;top:351.4px;width:70.4px;height:44.4px"><svg width="70" height="44" viewBox="0 0 70 44" ><polygon points="24.6,16.0 24.6,24.9 33.5,24.9" fill="#00008c"/><path d="M30.0 20.8 Q35.3 15.6 41.1 15.2 Q45.0 18.5 44.3 23.0 L42.0 26.0" fill="none" stroke="#00008c" stroke-width="2"/></svg></div><div class="b " style="left:0px;top:395.3px;width:70.4px;height:44.4px"><svg width="70" height="44" viewBox="0 0 70 44" ><polygon points="45.0,16.0 45.0,24.8 36.3,24.8" fill="#00008c"/><path d="M39.8 20.7 Q34.5 15.4 28.7 15.2 Q24.5 18.5 25.3 22.8 L27.6 25.9" fill="none" stroke="#00008c" stroke-width="2"/></svg></div><div class="b " style="left:70px;top:0.0px;width:71.4px;height:44.4px"><svg width="71" height="44" viewBox="0 0 71 44" ><rect x="29.6" y="16.7" width="11.0" height="9.7" fill="#f2f2fb" stroke="#ffff48" stroke-width="3"/></svg></div><div class="b " style="left:70px;top:43.9px;width:71.4px;height:44.4px"><svg width="71" height="44" viewBox="0 0 71 44" ><rect x="29.6" y="15.9" width="11.0" height="10.1" fill="#f2f2fb" stroke="#ffff48" stroke-width="3"/><line x1="22.4" y1="33.7" x2="47.8" y2="8.2" stroke="#2a2a2a" stroke-width="1.6" /></svg></div><div class="b " style="left:70px;top:87.8px;width:71.4px;height:44.4px"><svg width="71" height="44" viewBox="0 0 71 44" ><rect x="28.5" y="15.2" width="13.1" height="12.7" fill="#ffff48" stroke="none" stroke-width="0"/><rect x="32.8" y="19.1" width="4.6" height="4.4" fill="#000" stroke="none" stroke-width="0"/><line x1="22.4" y1="33.7" x2="34.7" y2="21.8" stroke="#2a2a2a" stroke-width="1.5" /><line x1="35.5" y1="21.8" x2="47.8" y2="33.7" stroke="#2a2a2a" stroke-width="1.5" /></svg></div><div class="b " style="left:70px;top:131.8px;width:71.4px;height:44.4px"><svg width="71" height="44" viewBox="0 0 71 44" ><rect x="30.0" y="15.9" width="10.1" height="10.1" fill="#f2f2fb" stroke="#ffff48" stroke-width="3"/><line x1="24.8" y1="30.8" x2="44.9" y2="10.7" stroke="#111" stroke-width="1.6" /><rect x="42.4" y="8.2" width="5.0" height="5.0" fill="#000" stroke="none" stroke-width="0"/><rect x="22.3" y="28.3" width="5.0" height="5.0" fill="#000" stroke="none" stroke-width="0"/></svg></div><div class="b " style="left:70px;top:175.7px;width:71.4px;height:44.4px"><svg width="71" height="44" viewBox="0 0 71 44" ><rect x="30.0" y="15.7" width="10.1" height="10.5" fill="#f2f2fb" stroke="#ffff48" stroke-width="3"/><line x1="24.4" y1="31.2" x2="45.6" y2="10.8" stroke="#222" stroke-width="2" stroke-dasharray="2 2.6"/></svg></div><div class="b " style="left:70px;top:219.6px;width:71.4px;height:44.4px"><svg width="71" height="44" viewBox="0 0 71 44" ><rect x="28.5" y="13.5" width="13.1" height="14.0" fill="#ffff48" stroke="none" stroke-width="0"/><line x1="24.4" y1="10.3" x2="47.8" y2="32.8" stroke="#2a2a2a" stroke-width="1.6" /><line x1="24.4" y1="31.0" x2="45.6" y2="10.5" stroke="#222" stroke-width="2" stroke-dasharray="2 2.6"/></svg></div><div class="b " style="left:70px;top:263.5px;width:71.4px;height:44.4px"><svg width="71" height="44" viewBox="0 0 71 44" ><rect x="39.1" y="7.3" width="9.2" height="9.2" fill="#ffff48" stroke="none" stroke-width="0"/><rect x="25.2" y="11.0" width="9.2" height="9.2" fill="#ffff48" stroke="none" stroke-width="0"/><rect x="21.9" y="24.1" width="9.2" height="9.2" fill="#ffff48" stroke="none" stroke-width="0"/><path d="M43.7 11.9 L36.7 12.9 L29.8 15.6 L27.7 21.8 L26.5 28.7" fill="none" stroke="#000" stroke-width="1.5" stroke-linejoin="round" stroke-linecap="round" /><rect x="41.1" y="9.3" width="5.2" height="5.2" fill="#000" stroke="none" stroke-width="0"/><rect x="27.2" y="13.0" width="5.2" height="5.2" fill="#000" stroke="none" stroke-width="0"/><rect x="23.9" y="26.1" width="5.2" height="5.2" fill="#000" stroke="none" stroke-width="0"/></svg></div><div class="b " style="left:70px;top:307.4px;width:71.4px;height:44.4px"><svg width="71" height="44" viewBox="0 0 71 44" ><rect x="22.4" y="7.8" width="27.1" height="25.0" fill="#0000e8" stroke="none" stroke-width="0"/><polygon points="22.4,26.3 22.4,32.8 29.8,32.8" fill="#000" stroke="none" stroke-width="1" /><path d="M43.7 11.5 L29.8 15.6 L26.5 28.7 L40.0 25.5 Z" fill="none" stroke="#e8e8a0" stroke-width="1.2" stroke-linejoin="round" stroke-linecap="round" stroke-dasharray="2 1.5"/><circle cx="43.7" cy="11.5" r="3.1" fill="#ffff20" stroke="none" stroke-width="0"/><circle cx="29.8" cy="15.6" r="3.1" fill="#ffff20" stroke="none" stroke-width="0"/><circle cx="40.0" cy="25.5" r="3.1" fill="#ffff20" stroke="none" stroke-width="0"/><circle cx="26.5" cy="28.7" r="3.1" fill="#ffff20" stroke="none" stroke-width="0"/></svg></div><div class="b " style="left:70px;top:351.4px;width:71.4px;height:44.4px"><span class="bt na" style="top:4px">Win</span></div><div class="b " style="left:70px;top:395.3px;width:71.4px;height:44.4px"><svg width="71" height="44" viewBox="0 0 71 44" ><rect x="25.5" y="8.9" width="5.2" height="5.2" fill="#000" stroke="none" stroke-width="0"/><rect x="25.5" y="17.5" width="5.2" height="5.2" fill="#000" stroke="none" stroke-width="0"/><rect x="25.5" y="26.1" width="5.2" height="5.2" fill="#000" stroke="none" stroke-width="0"/><rect x="34.1" y="8.9" width="5.2" height="5.2" fill="#000" stroke="none" stroke-width="0"/><rect x="34.1" y="26.1" width="5.2" height="5.2" fill="#000" stroke="none" stroke-width="0"/><rect x="42.8" y="8.9" width="5.2" height="5.2" fill="#000" stroke="none" stroke-width="0"/><rect x="42.8" y="17.5" width="5.2" height="5.2" fill="#000" stroke="none" stroke-width="0"/><rect x="42.8" y="26.1" width="5.2" height="5.2" fill="#000" stroke="none" stroke-width="0"/><circle cx="36.7" cy="20.1" r="5.6" fill="#ffff48" stroke="none" stroke-width="0"/><rect x="34.5" y="17.9" width="4.4" height="4.4" fill="#c80000" stroke="none" stroke-width="0"/></svg></div><div class="b " style="left:70px;top:439.2px;width:71.4px;height:44.4px"><svg width="71" height="44" viewBox="0 0 71 44" ><rect x="34.1" y="6.4" width="5.2" height="5.2" fill="#000" stroke="none" stroke-width="0"/><rect x="41.1" y="9.7" width="5.2" height="5.2" fill="#000" stroke="none" stroke-width="0"/><rect x="44.4" y="16.9" width="5.2" height="5.2" fill="#000" stroke="none" stroke-width="0"/><rect x="41.1" y="24.1" width="5.2" height="5.2" fill="#000" stroke="none" stroke-width="0"/><rect x="34.1" y="27.4" width="5.2" height="5.2" fill="#000" stroke="none" stroke-width="0"/><rect x="27.2" y="24.1" width="5.2" height="5.2" fill="#000" stroke="none" stroke-width="0"/><rect x="23.9" y="16.9" width="5.2" height="5.2" fill="#000" stroke="none" stroke-width="0"/><rect x="27.2" y="9.7" width="5.2" height="5.2" fill="#000" stroke="none" stroke-width="0"/><circle cx="36.7" cy="19.5" r="6.6" fill="#ffff48" stroke="none" stroke-width="0"/><rect x="34.4" y="17.2" width="4.6" height="4.6" fill="#c80000" stroke="none" stroke-width="0"/></svg></div><div class="b " style="left:70px;top:483.1px;width:71.4px;height:44.4px"><svg width="71" height="44" viewBox="0 0 71 44" ><rect x="28.5" y="13.5" width="12.7" height="12.7" fill="#ffff48" stroke="none" stroke-width="0"/><line x1="24.8" y1="30.0" x2="45.4" y2="9.9" stroke="#111" stroke-width="1.6" /><rect x="42.8" y="7.3" width="5.2" height="5.2" fill="#000" stroke="none" stroke-width="0"/><rect x="22.2" y="27.4" width="5.2" height="5.2" fill="#000" stroke="none" stroke-width="0"/><rect x="32.7" y="17.3" width="4.8" height="4.8" fill="#b00000" stroke="none" stroke-width="0"/><text x="45.4" y="32.7" text-anchor="middle" font-family="Liberation Sans, sans-serif" font-size="12.5px" font-weight="normal" fill="#2424b4">X</text></svg></div><div class="b " style="left:70px;top:527.0px;width:71.4px;height:44.4px"><svg width="71" height="44" viewBox="0 0 71 44" ><rect x="28.5" y="13.1" width="12.7" height="12.7" fill="#ffff48" stroke="none" stroke-width="0"/><line x1="24.8" y1="29.6" x2="45.4" y2="9.4" stroke="#111" stroke-width="1.6" /><rect x="42.8" y="6.8" width="5.2" height="5.2" fill="#000" stroke="none" stroke-width="0"/><rect x="22.2" y="27.0" width="5.2" height="5.2" fill="#000" stroke="none" stroke-width="0"/><rect x="32.7" y="16.9" width="4.8" height="4.8" fill="#b00000" stroke="none" stroke-width="0"/><text x="45.4" y="32.3" text-anchor="middle" font-family="Liberation Sans, sans-serif" font-size="12.5px" font-weight="normal" fill="#2424b4">Y</text></svg></div><div class="b " style="left:70px;top:571.0px;width:71.4px;height:44.4px"><svg width="71" height="44" viewBox="0 0 71 44" ><rect x="28.5" y="13.5" width="12.7" height="12.7" fill="#ffff48" stroke="none" stroke-width="0"/><line x1="24.8" y1="30.0" x2="45.4" y2="9.9" stroke="#111" stroke-width="1.6" /><rect x="42.8" y="7.3" width="5.2" height="5.2" fill="#000" stroke="none" stroke-width="0"/><rect x="22.2" y="27.4" width="5.2" height="5.2" fill="#000" stroke="none" stroke-width="0"/><rect x="32.7" y="17.3" width="4.8" height="4.8" fill="#b00000" stroke="none" stroke-width="0"/><text x="45.4" y="32.7" text-anchor="middle" font-family="Liberation Sans, sans-serif" font-size="12.5px" font-weight="bold" fill="#2424b4">Z</text></svg></div><div class="b " style="left:70px;top:614.9px;width:71.4px;height:44.4px"><svg width="71" height="44" viewBox="0 0 71 44" ><line x1="31.4" y1="22.9" x2="31.4" y2="9.4" stroke="#111" stroke-width="1.5" /><path d="M27.7 13.1 L31.4 8.9 L35.5 13.1" fill="none" stroke="#111" stroke-width="1.5" stroke-linejoin="round" stroke-linecap="round" /><line x1="31.4" y1="22.9" x2="45.4" y2="22.9" stroke="#111" stroke-width="1.5" /><path d="M41.2 19.2 L45.6 22.9 L41.2 26.6" fill="none" stroke="#111" stroke-width="1.5" stroke-linejoin="round" stroke-linecap="round" /><line x1="31.4" y1="22.9" x2="26.9" y2="31.1" stroke="#111" stroke-width="1.5" /><polygon points="26.2,27.8 26.2,31.8 31.8,31.8" fill="#111" stroke="none" stroke-width="1" /><circle cx="31.4" cy="22.9" r="2.6" fill="#b00010" stroke="none" stroke-width="0"/></svg></div></div></div>
<div class="panel" id="cad"><span id="pc" class="pt" style="left:14.41px;transform:scaleX(0.9697);top:13.6px;">CAD</span><div class="row" style="top:53.2px"><div class="b sel" style="left:0px;top:0px;width:71.4px;height:41.6px"><div class="bx"></div><span class="bt">Bld<i class="ar"></i></span></div><div class="b " style="left:0px;top:41.2px;width:71.4px;height:44.2px"><span class="bt">Snp<i class="ar"></i></span></div><div class="b " style="left:0px;top:85.0px;width:71.4px;height:44.2px"><span class="bt">Edi<i class="ar"></i></span></div><div class="b " style="left:0px;top:128.8px;width:71.4px;height:44.2px"><span class="bt">Grd<i class="ar"></i></span></div><div class="b " style="left:0px;top:172.6px;width:71.4px;height:44.2px"><span class="bt na">Conf</span></div><div class="b " style="left:0px;top:216.4px;width:71.4px;height:44.2px"><span class="bt na">Dock</span></div></div></div>
</body></html>
